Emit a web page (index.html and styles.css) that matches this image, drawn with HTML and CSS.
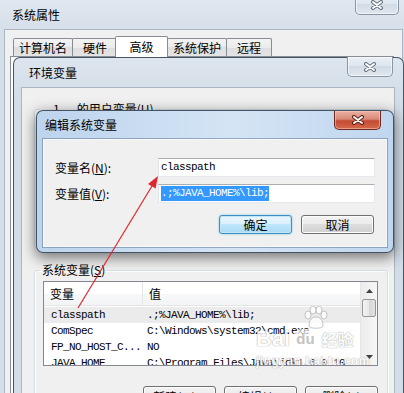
FILE: index.html
```html
<!DOCTYPE html>
<html lang="zh-CN">
<head>
  <meta charset="UTF-8" />
  <title>编辑系统变量</title>
  <link rel="stylesheet" href="styles.css">
</head>
<body>
  <div class="desktop">

    <!-- 系统属性 -->
    <div class="win win-sys">
      <div class="titlebar">
        <span class="title">系统属性</span>
        <div class="close close-idle">
          <svg width="14" height="10" viewBox="0 0 14 10"><path d="M3 2 L11 8 M11 2 L3 8" stroke="#66727f" stroke-width="4" stroke-linecap="round"/><path d="M3 2 L11 8 M11 2 L3 8" stroke="#fff" stroke-width="2" stroke-linecap="round"/></svg>
        </div>
      </div>
      <div class="client sys-client">
        <div class="tabs">
          <div class="tab">计算机名</div>
          <div class="tab">硬件</div>
          <div class="tab active">高级</div>
          <div class="tab">系统保护</div>
          <div class="tab">远程</div>
        </div>
        <div class="tab-panel"></div>
      </div>
    </div>

    <!-- 环境变量 -->
    <div class="win win-env">
      <div class="titlebar">
        <span class="title">环境变量</span>
        <div class="close close-idle">
          <svg width="14" height="10" viewBox="0 0 14 10"><path d="M3 2 L11 8 M11 2 L3 8" stroke="#66727f" stroke-width="4" stroke-linecap="round"/><path d="M3 2 L11 8 M11 2 L3 8" stroke="#fff" stroke-width="2" stroke-linecap="round"/></svg>
        </div>
      </div>
      <div class="client env-client">
        <fieldset class="group group-user">
          <legend><span class="owner">1</span>的用户变量(<u>U</u>)</legend>
        </fieldset>
        <fieldset class="group group-sys">
          <legend>系统变量(<u>S</u>)</legend>
          <div class="listview">
            <div class="lv-main">
              <div class="lv-header">
                <span class="col-name">变量</span>
                <span class="col-val">值</span>
              </div>
              <div class="lv-body">
                <div class="lv-row selected"><span class="col-name">classpath</span><span class="col-val">.;%JAVA_HOME%\lib;</span></div>
                <div class="lv-row"><span class="col-name">ComSpec</span><span class="col-val">C:\Windows\system32\cmd.exe</span></div>
                <div class="lv-row"><span class="col-name">FP_NO_HOST_C...</span><span class="col-val">NO</span></div>
                <div class="lv-row"><span class="col-name">JAVA_HOME</span><span class="col-val">C:\Program Files\Java\jdk1.6.0_10</span></div>
              </div>
            </div>
            <div class="scrollbar">
              <div class="sb-arrow"><svg width="7" height="4" viewBox="0 0 7 4"><path d="M0 4 L3.5 0 L7 4 Z" fill="#404040"/></svg></div>
              <div class="sb-thumb"></div>
              <div class="sb-track"></div>
              <div class="sb-arrow"><svg width="7" height="4" viewBox="0 0 7 4"><path d="M0 0 L7 0 L3.5 4 Z" fill="#404040"/></svg></div>
            </div>
          </div>
          <div class="btn-row">
            <button class="btn btn-wide">新建(<u>W</u>)...</button>
            <button class="btn btn-wide">编辑(<u>I</u>)...</button>
            <button class="btn btn-wide">删除(<u>L</u>)</button>
          </div>
        </fieldset>
      </div>
    </div>

    <!-- 编辑系统变量 -->
    <div class="win win-edit">
      <div class="titlebar">
        <span class="title">编辑系统变量</span>
        <div class="close close-red">
          <svg width="14" height="10" viewBox="0 0 14 10"><path d="M3 2 L11 8 M11 2 L3 8" stroke="#5a1a12" stroke-width="4" stroke-linecap="round"/><path d="M3 2 L11 8 M11 2 L3 8" stroke="#fff" stroke-width="2" stroke-linecap="round"/></svg>
        </div>
      </div>
      <div class="client edit-client">
        <div class="form">
          <label class="field-label">变量名(<u>N</u>):</label>
          <div class="textbox">classpath</div>
          <label class="field-label">变量值(<u>V</u>):</label>
          <div class="textbox"><span class="sel">.;%JAVA_HOME%\lib;</span></div>
        </div>
        <div class="dialog-buttons">
          <button class="btn btn-default">确定</button>
          <button class="btn">取消</button>
        </div>
      </div>
    </div>

    <!-- annotation arrow -->
    <svg class="arrow" width="404" height="393" viewBox="0 0 404 393">
      <line x1="78" y1="308" x2="152" y2="186" stroke="#e0262b" stroke-width="1.2"/>
      <polygon points="158,176 155.6,188.6 148,184" fill="#e0262b"/>
    </svg>

    <!-- watermark -->
    <div class="watermark">
      <svg class="paw" width="26" height="24" viewBox="0 0 26 24">
        <ellipse cx="6" cy="9" rx="3" ry="4" />
        <ellipse cx="11" cy="4" rx="3" ry="4" />
        <ellipse cx="17" cy="4" rx="3" ry="4" />
        <ellipse cx="22" cy="9" rx="3" ry="4" />
        <path d="M7 20 C7 14 10 11 14 11 C18 11 21 14 21 20 C21 23 7 23 7 20 Z" />
      </svg>
      <div class="wm-logo"><span class="wm-bai">Bai</span><span class="wm-du">du</span><span class="wm-jy">经验</span></div>
      <div class="wm-url">jingyan.baidu.com</div>
    </div>

  </div>
</body>
</html>
```

FILE: styles.css
```css
* {
  margin: 0;
  padding: 0;
  box-sizing: border-box;
}

body {
  width: 404px;
  height: 393px;
  overflow: hidden;
  background-color: #6f8aa3;
  font-family: "Noto Sans CJK SC", "Liberation Sans", sans-serif;
  font-size: 12px;
  color: #000;
}

.desktop {
  position: relative;
  width: 404px;
  height: 393px;
  overflow: hidden;
}

/* windows */
.win {
  position: absolute;
  display: flex;
  flex-direction: column;
  border: 1px solid rgba(45, 60, 75, 0.85);
  border-radius: 7px 7px 0 0;
}

.titlebar {
  position: relative;
  display: flex;
  align-items: center;
  flex-shrink: 0;
  padding-left: 8px;
}

.title {
  line-height: 14px;
  white-space: nowrap;
}

.client {
  flex: 1;
  background-color: #f0f0f0;
  border: 1px solid #a9b6c3;
}

.close {
  position: absolute;
  display: flex;
  align-items: center;
  justify-content: center;
  width: 46px;
  height: 20px;
  border-radius: 0 0 5px 5px;
}

.close-idle {
  border: 1px solid #8896a6;
  border-top: none;
  background: linear-gradient(#e9eff5, #dde5ee 50%, #d2dbe5 50%, #dfe6ee);
  box-shadow: inset 0 0 0 1px rgba(255, 255, 255, 0.6);
}

.close-red {
  border: 1px solid #6e2a20;
  border-top: none;
  background: linear-gradient(#eab0a4, #d98a78 45%, #c44a33 55%, #d46a4c);
  box-shadow: inset 0 0 0 1px rgba(255, 210, 200, 0.5);
}

/* 系统属性 */
.win-sys {
  left: -4px;
  top: -5px;
  width: 416px;
  height: 410px;
  padding: 0 8px 8px 7px;
  background: linear-gradient(#e1e9f1, #d4dee8 40px);
}

.win-sys .titlebar {
  height: 33px;
  padding-top: 5px;
}

.win-sys .close {
  top: -1px;
  right: 4px;
  width: 44px;
}

.sys-client {
  display: flex;
  flex-direction: column;
  padding: 6px 8px 0 5px;
}

.tabs {
  display: flex;
  align-items: flex-end;
  height: 20px;
  margin-left: 3px;
}

.tab {
  position: relative;
  height: 18px;
  min-width: 46px;
  padding: 0 5px;
  margin-right: -1px;
  border: 1px solid #898c95;
  border-bottom: none;
  border-radius: 2px 2px 0 0;
  background: linear-gradient(#f3f3f3, #ebebeb 50%, #dedede 50%, #e4e4e4);
  line-height: 17px;
  text-align: center;
  white-space: nowrap;
}

.tab.active {
  z-index: 1;
  height: 21px;
  min-width: 53px;
  margin: 0 -1px -1px -2px;
  background: #fff;
  line-height: 19px;
}

.tab-panel {
  flex: 1;
  background-color: #fff;
  border: 1px solid #898c95;
}

/* 环境变量 */
.win-env {
  left: 13px;
  top: 57px;
  width: 391px;
  height: 360px;
  padding: 0 8px 8px 7px;
  background: linear-gradient(#dde6ef, #d3dde7 40px);
}

.win-env .titlebar {
  height: 29px;
}

.win-env .close {
  top: -1px;
  right: 2px;
}

.env-client {
  display: flex;
  flex-direction: column;
  padding: 14px 6px 0 12px;
}

.group {
  border: 1px solid #d5dfe5;
  border-radius: 3px;
  padding: 0 9px 0 8px;
  box-shadow: 1px 1px 0 #fff, inset 1px 1px 0 #fff;
}

.group legend {
  margin-left: -3px;
  padding: 0 2px;
  line-height: 14px;
  white-space: nowrap;
}

.group-user {
  height: 147px;
}

.owner {
  margin: 0 17px 0 11px;
}

.group-sys {
  margin-top: 14px;
  padding-bottom: 10px;
}

/* list view */
.listview {
  display: flex;
  height: 85px;
  margin-top: 4px;
  border: 1px solid #828790;
  background-color: #fff;
}

.lv-main {
  flex: 1;
  overflow: hidden;
}

.lv-header {
  display: flex;
  height: 24px;
  align-items: center;
  border-bottom: 1px solid #e5e5e5;
  background: linear-gradient(#fff, #fff 50%, #f7f8fa 50%, #f3f4f6);
}

.lv-header .col-name {
  width: 99px;
  height: 100%;
  padding-left: 6px;
  line-height: 24px;
  border-right: 1px solid #e3e5e8;
}

.lv-header .col-val {
  padding-left: 6px;
}

.lv-body {
  padding-top: 1px;
  font-family: "Liberation Mono", "DejaVu Sans Mono", monospace;
  font-size: 11px;
  letter-spacing: -0.6px;
}

.lv-row {
  display: flex;
  height: 16px;
  line-height: 16px;
  white-space: nowrap;
}

.lv-row.selected {
  background-color: #ebebeb;
}

.lv-row .col-name {
  width: 99px;
  padding-left: 7px;
  overflow: hidden;
}

.lv-row .col-val {
  padding-left: 4px;
}

.scrollbar {
  display: flex;
  flex-direction: column;
  width: 17px;
  border-left: 1px solid #e6e6e6;
  background: linear-gradient(to right, #ececec, #f6f6f6);
}

.sb-arrow {
  display: flex;
  align-items: center;
  justify-content: center;
  height: 17px;
}

.sb-thumb {
  height: 18px;
  margin: 0 1px;
  border: 1px solid #979797;
  border-radius: 2px;
  background: linear-gradient(to right, #f4f4f4, #e6e6e6 50%, #d6d6d6 50%, #e2e2e2);
}

.sb-track {
  flex: 1;
}

.btn-row {
  display: flex;
  justify-content: flex-end;
  gap: 8px;
  margin-top: 20px;
}

/* buttons */
.btn {
  width: 73px;
  height: 19px;
  font: inherit;
  color: #000;
  line-height: 17px;
  border: 1px solid #707070;
  border-radius: 3px;
  background: linear-gradient(#f2f2f2, #ebebeb 50%, #dddddd 50%, #cfcfcf);
  box-shadow: inset 0 0 0 1px #fcfcfc;
}

.btn-wide {
  height: 20px;
}

.btn-default {
  border-color: #3c8fc0;
  background: linear-gradient(#eaf6fd, #d9f0fc 50%, #bee6fd 50%, #a9daf5);
  box-shadow: inset 0 0 0 1px #c2e6f8, 0 0 2px #6cc2ea;
}

/* 编辑系统变量 */
.win-edit {
  left: 36px;
  top: 110px;
  width: 358px;
  height: 143px;
  padding: 0 6px 5px;
  border-radius: 7px;
  background: linear-gradient(to right, #bdd4ed, #d4e4f5 55%, #c0d6ee);
  box-shadow: 0 4px 14px 1px rgba(0, 0, 0, 0.5);
}

.win-edit .titlebar {
  height: 28px;
  padding-left: 2px;
}

.win-edit .close {
  top: 0;
  right: 6px;
  width: 47px;
  height: 19px;
}

.edit-client {
  display: flex;
  flex-direction: column;
  padding: 18px 11px 0 11px;
  border-color: #f7fafd;
  box-shadow: 0 0 0 1px rgba(95, 120, 150, 0.55);
}

.form {
  display: grid;
  grid-template-columns: 103px 1fr;
  grid-auto-rows: 19px;
  row-gap: 7px;
  align-items: center;
}

.field-label {
  line-height: 14px;
  white-space: nowrap;
}

.textbox {
  height: 19px;
  padding-left: 2px;
  border: 1px solid #abadb3;
  border-color: #abadb3 #e3e9ef #e3e9ef #e2e3ea;
  background-color: #fff;
  font-family: "Liberation Mono", "DejaVu Sans Mono", monospace;
  font-size: 11px;
  letter-spacing: -0.6px;
  line-height: 17px;
  white-space: nowrap;
}

.sel {
  display: inline-block;
  height: 15px;
  line-height: 15px;
  background-color: #3399ff;
  color: #fff;
}

.dialog-buttons {
  display: flex;
  justify-content: flex-end;
  gap: 9px;
  margin: 12px 1px 0 0;
}

/* overlays */
.arrow {
  position: absolute;
  left: 0;
  top: 0;
  pointer-events: none;
}

.watermark {
  position: absolute;
  left: 256px;
  top: 306px;
  width: 118px;
  opacity: 0.8;
  color: #fff;
  font-family: "Liberation Sans", sans-serif;
  font-weight: bold;
  text-shadow: 0 0 1px #9a9a9a, 0 0 1px #9a9a9a;
  pointer-events: none;
}

.paw {
  display: block;
  margin-left: 46px;
  fill: #fff;
  stroke: #a8a8a8;
  stroke-width: 0.8;
}

.wm-logo {
  display: flex;
  align-items: center;
  margin-top: -2px;
  white-space: nowrap;
}

.wm-bai {
  font-size: 22px;
  line-height: 22px;
}

.wm-du {
  margin: 0 3px 0 2px;
  padding: 0 4px;
  border-radius: 10px;
  background-color: rgba(255, 255, 255, 0.85);
  color: #b5b5b5;
  font-size: 15px;
  line-height: 20px;
  text-shadow: none;
}

.wm-jy {
  font-family: "Noto Sans CJK SC", sans-serif;
  font-size: 16px;
  line-height: 20px;
}

.wm-url {
  margin-top: 4px;
  font-size: 12px;
  letter-spacing: 0.5px;
}
```
